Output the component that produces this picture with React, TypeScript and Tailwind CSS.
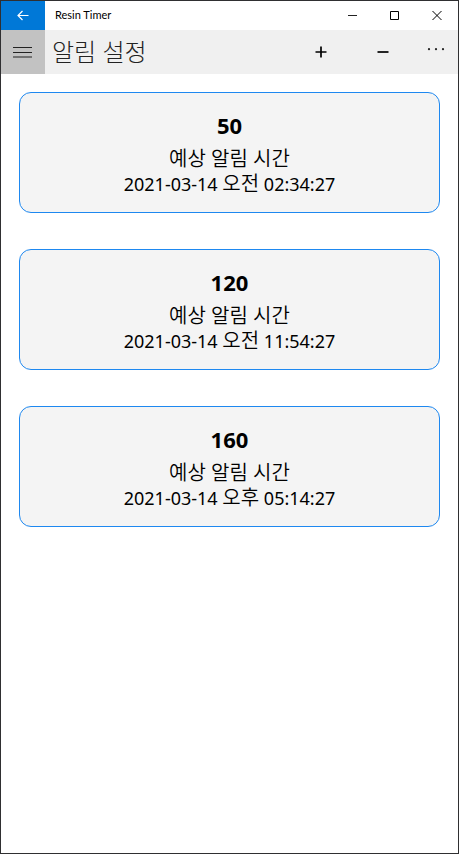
import React from "react";

type Alarm = { count: number; date: string; period: string; clock: string };

const alarms: Alarm[] = [
  { count: 50, date: "2021-03-14", period: "오전", clock: "02:34:27" },
  { count: 120, date: "2021-03-14", period: "오전", clock: "11:54:27" },
  { count: 160, date: "2021-03-14", period: "오후", clock: "05:14:27" },
];

function TitleBar() {
  return (
    <header className="flex h-[29px] items-stretch bg-white">
      <button type="button" aria-label="Back" className="flex w-11 items-center justify-center bg-[#0078d7] text-white">
        <svg width="12" height="12" viewBox="0 0 12 12" fill="none" stroke="currentColor" strokeWidth="1.2">
          <path d="M11.5 5.5H1M5.5 1L1 5.5l4.5 4.5" />
        </svg>
      </button>
      <span className="flex flex-1 items-center pl-[10px] font-['Lato',sans-serif] text-[11px]">Resin Timer</span>
      <button type="button" aria-label="Minimize" className="flex w-[42px] items-center justify-center">
        <svg width="10" height="10" viewBox="0 0 10 10" stroke="#222">
          <path d="M1 4.5h9" />
        </svg>
      </button>
      <button type="button" aria-label="Maximize" className="flex w-[42px] items-center justify-center">
        <svg width="10" height="10" viewBox="0 0 10 10" fill="none" stroke="#000">
          <path d="M1.5 .5h8v8h-8z" />
        </svg>
      </button>
      <button type="button" aria-label="Close" className="flex w-[43px] items-center justify-center">
        <svg width="10" height="10" viewBox="0 0 10 10" fill="none" stroke="#000">
          <path d="M.5 0l9 9M9.5 0l-9 9" />
        </svg>
      </button>
    </header>
  );
}

function CommandBar() {
  return (
    <nav className="flex h-11 items-stretch bg-[#f0f0f0]">
      <button type="button" aria-label="Menu" className="flex w-11 items-center justify-center bg-[#c2c2c2]">
        <svg width="20" height="12" viewBox="0 0 20 12" stroke="#222">
          <path d="M0 1.5h19M0 6.5h19M0 11h19" />
        </svg>
      </button>
      <h1 className="flex flex-1 items-center pl-[7px] text-2xl font-light text-[#222]">알림 설정</h1>
      <button type="button" aria-label="Add" className="flex w-[62px] items-center justify-center">
        <svg width="12" height="12" viewBox="0 0 12 12" stroke="#000" strokeWidth="1.7">
          <path d="M.5 6h11M6 .5v11" />
        </svg>
      </button>
      <button type="button" aria-label="Remove" className="flex w-[62px] items-center justify-center">
        <svg width="12" height="12" viewBox="0 0 12 12" stroke="#000" strokeWidth="1.7">
          <path d="M.5 6h11" />
        </svg>
      </button>
      <button type="button" aria-label="More" className="flex w-11 items-start justify-center pt-[18px]">
        <svg width="18" height="3" viewBox="0 0 18 3" fill="#222">
          <circle cx="2" cy="1.2" r="1.1" />
          <circle cx="9" cy="1.2" r="1.1" />
          <circle cx="16" cy="1.2" r="1.1" />
        </svg>
      </button>
    </nav>
  );
}

function AlarmCard({ count, date, period, clock }: Alarm) {
  return (
    <li className="flex flex-col items-center rounded-xl border border-[#1e88f0] bg-[#f4f4f4] pt-[18px] pb-[15px] text-black">
      <h2 className="text-[22px] leading-7 font-bold">{count}</h2>
      <p className="pt-2 text-xl leading-6 font-[350]">예상 알림 시간</p>
      <p className="text-lg leading-[25px]">
        <time>
          {date} <span className="text-xl leading-[25px] font-[350]">{period}</span> {clock}
        </time>
      </p>
    </li>
  );
}

export default function App() {
  return (
    <div className="flex min-h-screen flex-col border border-[#2f2f31] bg-white font-['Noto_Sans','Noto_Sans_CJK_KR',sans-serif] text-black">
      <TitleBar />
      <CommandBar />
      <main className="px-[18px] pt-[18px]">
        <ul className="flex flex-col gap-9">
          {alarms.map((alarm) => (
            <AlarmCard key={alarm.count} {...alarm} />
          ))}
        </ul>
      </main>
    </div>
  );
}
